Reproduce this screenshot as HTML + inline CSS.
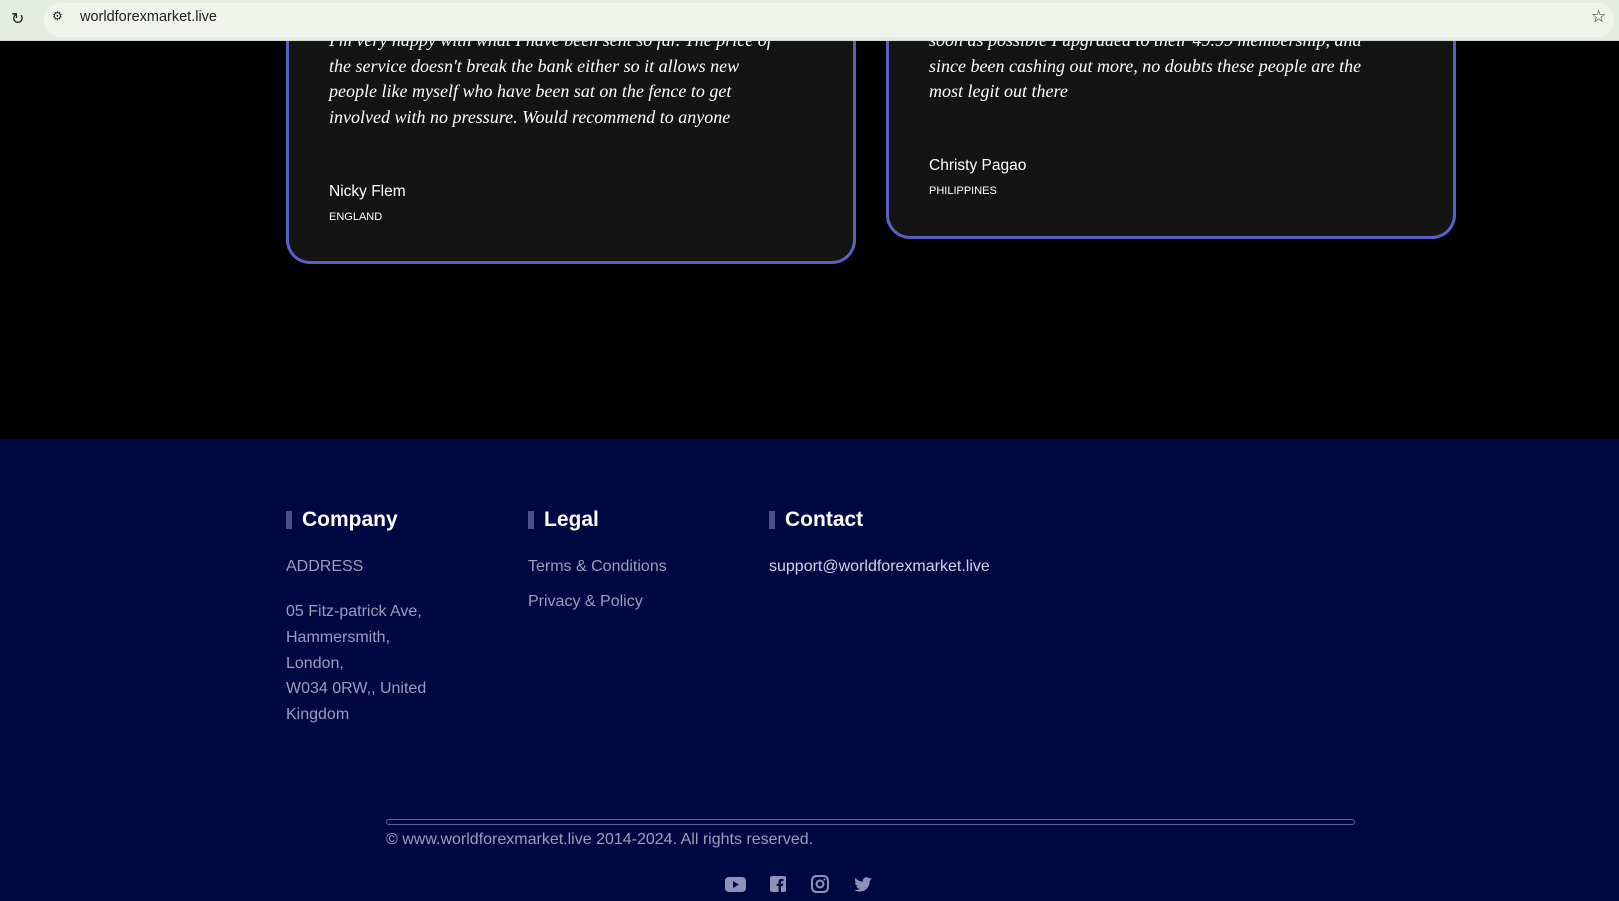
<!DOCTYPE html>
<html><head><meta charset="utf-8"><style>
*{margin:0;padding:0;box-sizing:border-box}
body{width:1619px;height:901px;overflow:hidden;background:#000;font-family:"Liberation Sans",sans-serif;position:relative}
.bar{position:absolute;left:0;top:0;width:1619px;height:41px;background:#e5ede0;z-index:5;border-bottom:1px solid #d5dcd0}
.url{position:absolute;left:44px;top:3px;width:1570px;height:34px;background:#f0f4ec;border-radius:17px}
.bar span{position:absolute;font-size:14.5px;color:#222}
.card{position:absolute;background:#141414;border:3px solid #5d5fc4;border-radius:0 0 24px 24px;border-top:none}
.q{position:absolute;left:40px;font-family:"Liberation Serif",serif;font-style:italic;color:#fff;font-size:18px;line-height:25.5px;width:520px;white-space:nowrap}
.n{position:absolute;left:40px;color:#fff;font-size:15.5px}
.c{position:absolute;left:40px;color:#fff;font-size:11px}
.foot{position:absolute;left:0;top:439px;width:1619px;height:462px;background:#000842}
.h{position:absolute;top:72px;color:#fff;font-weight:bold;font-size:21px;padding-left:10px;border-left:6px solid #4a4f8a;line-height:18px}
.t{position:absolute;color:#9a9dbb;font-size:16px;line-height:25.8px}
</style></head><body>
<div class="bar"><div class="url"></div>
<span style="left:11px;top:9px;font-size:16px">↻</span>
<span style="left:52px;top:9px;font-size:12px">⚙</span>
<span style="left:80px;top:9px">worldforexmarket.live</span>
<span style="left:1591px;top:7px;font-size:17px">☆</span></div>
<div class="card" style="left:286px;top:0;width:570px;height:264px">
<div class="q" style="top:28px">I'm very happy with what I have been sent so far. The price of<br>the service doesn't break the bank either so it allows new<br>people like myself who have been sat on the fence to get<br>involved with no pressure. Would recommend to anyone</div>
<div class="n" style="top:183px">Nicky Flem</div><div class="c" style="top:211px">ENGLAND</div></div>
<div class="card" style="left:886px;top:0;width:570px;height:239px">
<div class="q" style="top:28px">soon as possible I upgraded to their 49.99 membership, and<br>since been cashing out more, no doubts these people are the<br>most legit out there</div>
<div class="n" style="top:157px">Christy Pagao</div><div class="c" style="top:185px">PHILIPPINES</div></div>
<div class="foot">
<div class="h" style="left:286px">Company</div>
<div class="h" style="left:528px">Legal</div>
<div class="h" style="left:769px">Contact</div>
<div class="t" style="left:286px;top:115px">ADDRESS</div>
<div class="t" style="left:286px;top:160px">05 Fitz-patrick Ave,<br>Hammersmith,<br>London,<br>W034 0RW,, United<br>Kingdom</div>
<div class="t" style="left:528px;top:115px">Terms &amp; Conditions</div>
<div class="t" style="left:528px;top:150px">Privacy &amp; Policy</div>
<div class="t" style="left:769px;top:115px;color:#d0d2e6">support@worldforexmarket.live</div>
<div style="position:absolute;left:386px;top:380px;width:969px;height:6px;border:1px solid #5a5f96;border-radius:3px"></div>
<div class="t" style="left:386px;top:388px">© www.worldforexmarket.live 2014-2024. All rights reserved.</div>
<svg style="position:absolute;left:720px;top:433px" width="160" height="24" viewBox="0 0 160 24" fill="#8e91b8">
<rect x="5" y="5" width="21" height="15" rx="4"/><path d="M13 9l6 3.5-6 3.5z" fill="#000842"/>
<rect x="50" y="4" width="16" height="16" rx="2"/><path d="M61 20v-6h2l.4-2.4H61v-1.4c0-.7.3-1.1 1.2-1.1h1.3V7c-.5-.1-1.2-.1-1.9-.1-2 0-3 1.1-3 3v1.7h-2V14h2v6z" fill="#000842"/>
<rect x="92" y="4" width="16" height="16" rx="4.5" fill="none" stroke="#8e91b8" stroke-width="2"/><circle cx="100" cy="12" r="3.5" fill="none" stroke="#8e91b8" stroke-width="2"/><circle cx="104.5" cy="7.5" r="1"/>
<path d="M152 7c-.7.3-1.4.5-2.1.6.8-.5 1.300-1.200 1.600-2-.7.4-1.5.7-2.3.9a3.6 3.6 0 0 0-6.2 3.3c-3-.2-5.7-1.6-7.5-3.8-1 1.7-.5 3.8 1.1 4.8-.6 0-1.1-.2-1.6-.4 0 1.8 1.2 3.3 2.9 3.6-.5.1-1.1.2-1.6.1.5 1.5 1.9 2.5 3.4 2.5A7.3 7.3 0 0 1 134 18c1.6 1 3.5 1.6 5.5 1.6 6.7 0 10.4-5.6 10.2-10.6.7-.5 1.4-1.2 1.9-1.9z"/>
</svg>
</div>
</body></html>
